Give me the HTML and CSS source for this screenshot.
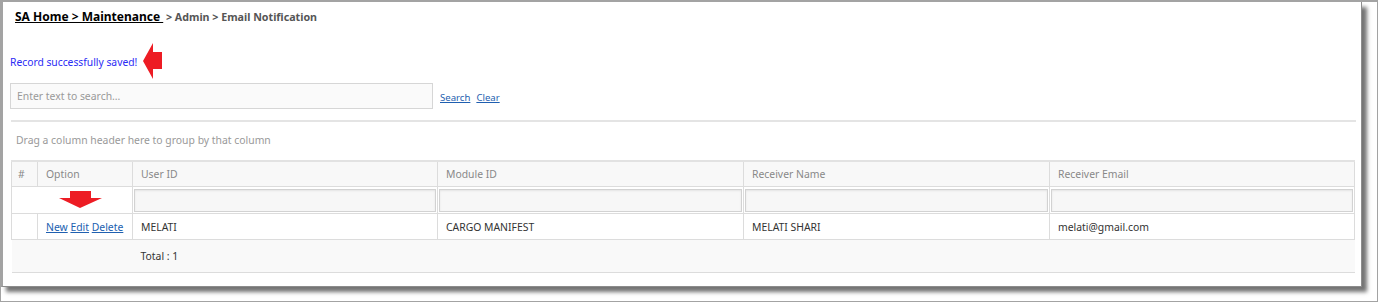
FILE: index.html
```html
<!DOCTYPE html>
<html lang="en">
<head>
  <meta charset="UTF-8">
  <title>Email Notification</title>
  <link rel="stylesheet" href="styles.css">
</head>
<body>
  <div class="frame">
    <div class="window">
      <div class="breadcrumb">
        <a class="crumb_home" href="#">SA Home &gt; Maintenance&nbsp;</a>
        <span class="crumb_rest">&gt; Admin &gt; Email Notification</span>
      </div>

      <div class="message">
        <span>Record successfully saved!</span>
        <!-- annotation arrow -->
        <svg class="arrow_left" width="20" height="36" viewBox="0 0 20 36">
          <polygon points="0,18 10,0 10,9 19,9 19,26 10,26 10,36" fill="#ed1c24"/>
        </svg>
      </div>

      <div class="search_bar">
        <input class="search_box" type="text" placeholder="Enter text to search...">
        <a href="#">Search</a>
        <a href="#">Clear</a>
      </div>

      <div class="group_panel">Drag a column header here to group by that column</div>

      <table class="grid">
        <colgroup>
          <col style="width: 26px">
          <col style="width: 95px">
          <col style="width: 305px">
          <col style="width: 306px">
          <col style="width: 306px">
          <col>
        </colgroup>
        <tr class="head_row">
          <th class="num">#</th>
          <th>Option</th>
          <th>User ID</th>
          <th>Module ID</th>
          <th>Receiver Name</th>
          <th>Receiver Email</th>
        </tr>
        <tr class="filter_row">
          <td colspan="2" class="arrow_cell">
            <svg class="arrow_down" width="43" height="17" viewBox="0 0 43 17">
              <polygon points="11,0 32,0 32,7 43,7 21,17 0,7 11,7" fill="#ed1c24"/>
            </svg>
          </td>
          <td><div class="filter_box"></div></td>
          <td><div class="filter_box"></div></td>
          <td><div class="filter_box"></div></td>
          <td><div class="filter_box"></div></td>
        </tr>
        <tr class="data_row">
          <td></td>
          <td class="options"><a href="#">New</a> <a href="#">Edit</a> <a href="#">Delete</a></td>
          <td>MELATI</td>
          <td>CARGO MANIFEST</td>
          <td>MELATI SHARI</td>
          <td>melati@gmail.com</td>
        </tr>
        <tr class="foot_row">
          <td></td>
          <td></td>
          <td colspan="4">Total : 1</td>
        </tr>
      </table>
    </div>
  </div>
</body>
</html>
```

FILE: styles.css
```css
body {
  margin: 0;
  background: #fff;
  font-family: 'Noto Sans', 'Open Sans', sans-serif;
  font-size: 10.4px;
  color: #333;
}

.frame {
  width: 1378px;
  height: 302px;
  box-sizing: border-box;
  border: 1px solid #a3a3a3;
  border-top-width: 2px;
  padding: 0 14px 14px 0;
  overflow: hidden;
}

.window {
  position: relative;
  width: 1361px;
  height: 285px;
  box-sizing: border-box;
  border-left: 2px solid #a3a3a3;
  border-right: 1px solid #8c8c8c;
  border-bottom: 1px solid #8c8c8c;
  padding: 0 5px 0 7px;
  background: #fff;
  box-shadow: 5px 5px 4px rgba(0, 0, 0, 0.55);
}

.breadcrumb {
  height: 30px;
  padding: 6px 0 0 5px;
  box-sizing: border-box;
  font-weight: bold;
}

.crumb_home {
  color: #000;
  font-size: 12px;
  text-decoration: underline;
}

.crumb_rest {
  color: #555;
  font-size: 10.7px;
}

.message {
  position: relative;
  height: 50px;
  padding-top: 23px;
  box-sizing: border-box;
  color: #2b2bf5;
  font-size: 10.3px;
}

.arrow_left {
  position: absolute;
  left: 133px;
  top: 11px;
}

.search_bar {
  display: flex;
  align-items: center;
  gap: 6px;
  height: 27px;
}

.search_box {
  width: 423px;
  height: 26px;
  box-sizing: border-box;
  margin: 0 1px 0 0;
  border: 1px solid #d6d6d6;
  background: #fafafa;
  padding: 0 6px;
  font-family: inherit;
  font-size: 10.4px;
  outline: none;
}

.search_box::placeholder {
  color: #999;
}

.search_bar a {
  color: #1f5fb0;
  font-size: 9.6px;
  margin-top: 3px;
}

.group_panel {
  margin: 11px 0 0 1px;
  height: 40px;
  border-top: 2px solid #e4e4e4;
  padding: 11px 0 0 5px;
  box-sizing: border-box;
  color: #999;
}

.grid {
  margin-left: 1px;
  width: 1344px;
  border-collapse: collapse;
  table-layout: fixed;
}

.grid th,
.grid td {
  border: 1px solid #dcdcdc;
  padding: 0 8px;
  text-align: left;
  white-space: nowrap;
}

.head_row th {
  height: 24px;
  background: #f8f8f8;
  border-top: 2px solid #e2e2e2;
  font-weight: normal;
  color: #888;
}

.head_row .num {
  padding-left: 6px;
}

.filter_row td {
  height: 24px;
  padding: 1px 1px;
  background: #fff;
}

.arrow_cell {
  position: relative;
}

.arrow_down {
  position: absolute;
  left: 47px;
  top: 4px;
}

.filter_box {
  height: 21px;
  border: 1px solid #d2d2d2;
  background: #f7f7f7;
  box-shadow: inset 0 1px 2px rgba(0, 0, 0, 0.08);
}

.data_row td {
  height: 25px;
  color: #333;
}

.options a {
  color: #2060b0;
}

.foot_row td {
  height: 32px;
  background: #f9f9f9;
  border-left: none;
  border-right: none;
  color: #333;
}
```
